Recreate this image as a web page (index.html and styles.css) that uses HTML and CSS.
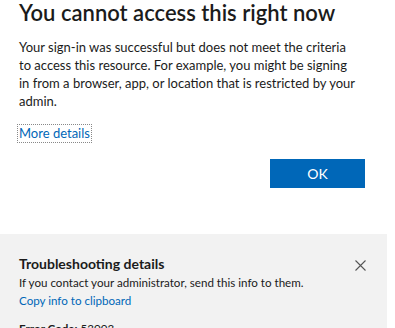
FILE: index.html
```html
<!DOCTYPE html>
<html lang="en">
  <head>
    <meta charset="UTF-8" />
    <meta name="viewport" content="width=device-width, initial-scale=1.0" />
    <title>Access blocked</title>
    <link rel="stylesheet" href="styles.css">
  </head>

  <body>
    <div class="content">
      <div class="page-title">You cannot access this right now</div>
      <p class="message">
        Your sign-in was successful but does not meet the criteria<br>
        to access this resource. For example, you might be signing<br>
        in from a browser, app, or location that is restricted by your<br>
        admin.
      </p>
      <div class="details-row">
        <a href="#" class="more-link">More details</a>
      </div>
      <div class="button-row">
        <button type="button" class="ok-button">OK</button>
      </div>
    </div>

    <div class="trouble-panel">
      <div class="trouble-head">
        <div class="trouble-title">Troubleshooting details</div>
        <button type="button" class="close-button" aria-label="Close">
          <svg width="11" height="11" viewBox="0 0 11 11">
            <path d="M0.5 0.5 L10.5 10.5 M10.5 0.5 L0.5 10.5" stroke="#555" stroke-width="1.1" fill="none" />
          </svg>
        </button>
      </div>
      <div class="trouble-text">If you contact your administrator, send this info to them.</div>
      <a href="#" class="copy-link">Copy info to clipboard</a>
      <div class="error-code"><b>Error Code:</b> 53003</div>
    </div>
  </body>
</html>
```

FILE: styles.css
```css
/* Page base */
body {
  margin: 0;
  background-color: #fff;
  font-family: Lato, "Noto Sans", sans-serif;
  color: #1b1b1b;
  overflow: hidden;
}

.content {
  padding: 0 30px 0 19px;
}

.page-title {
  font-size: 22px;
  font-weight: 600;
  line-height: 26px;
  margin: 0;
}

.message {
  font-size: 13px;
  line-height: 18px;
  margin: 12px 0 0 0;
  white-space: nowrap;
}

/* Link with focus outline */
.details-row {
  margin-top: 12px;
  margin-left: -2px;
}

.more-link {
  display: inline-block;
  font-size: 13px;
  line-height: 17px;
  padding: 0 1px;
  color: #0067b8;
  text-decoration: none;
  border: 1px dotted #888;
}

.button-row {
  display: flex;
  justify-content: flex-end;
  margin-top: 16px;
}

.ok-button {
  width: 95px;
  height: 29px;
  background-color: #0067b8;
  color: white;
  border: none;
  font-family: inherit;
  font-size: 14px;
  padding: 0;
  cursor: pointer;
}

/* Troubleshooting panel */
.trouble-panel {
  margin: 46px 8px 0 0;
  padding: 20px 21px 10px 19px;
  background-color: #f2f2f2;
}

.trouble-head {
  display: flex;
  justify-content: space-between;
  align-items: center;
}

.trouble-title {
  font-size: 14px;
  font-weight: 700;
  line-height: 20px;
}

.close-button {
  background: none;
  border: none;
  padding: 0;
  margin-top: 3px;
  width: 11px;
  height: 11px;
  display: flex;
  cursor: pointer;
}

.trouble-text {
  font-size: 11.6px;
  line-height: 17px;
}

.copy-link {
  display: block;
  font-size: 11.6px;
  line-height: 17px;
  margin-top: 1px;
  color: #0067b8;
  text-decoration: none;
}

.error-code {
  font-size: 11.6px;
  line-height: 17px;
  margin-top: 11px;
}
```
